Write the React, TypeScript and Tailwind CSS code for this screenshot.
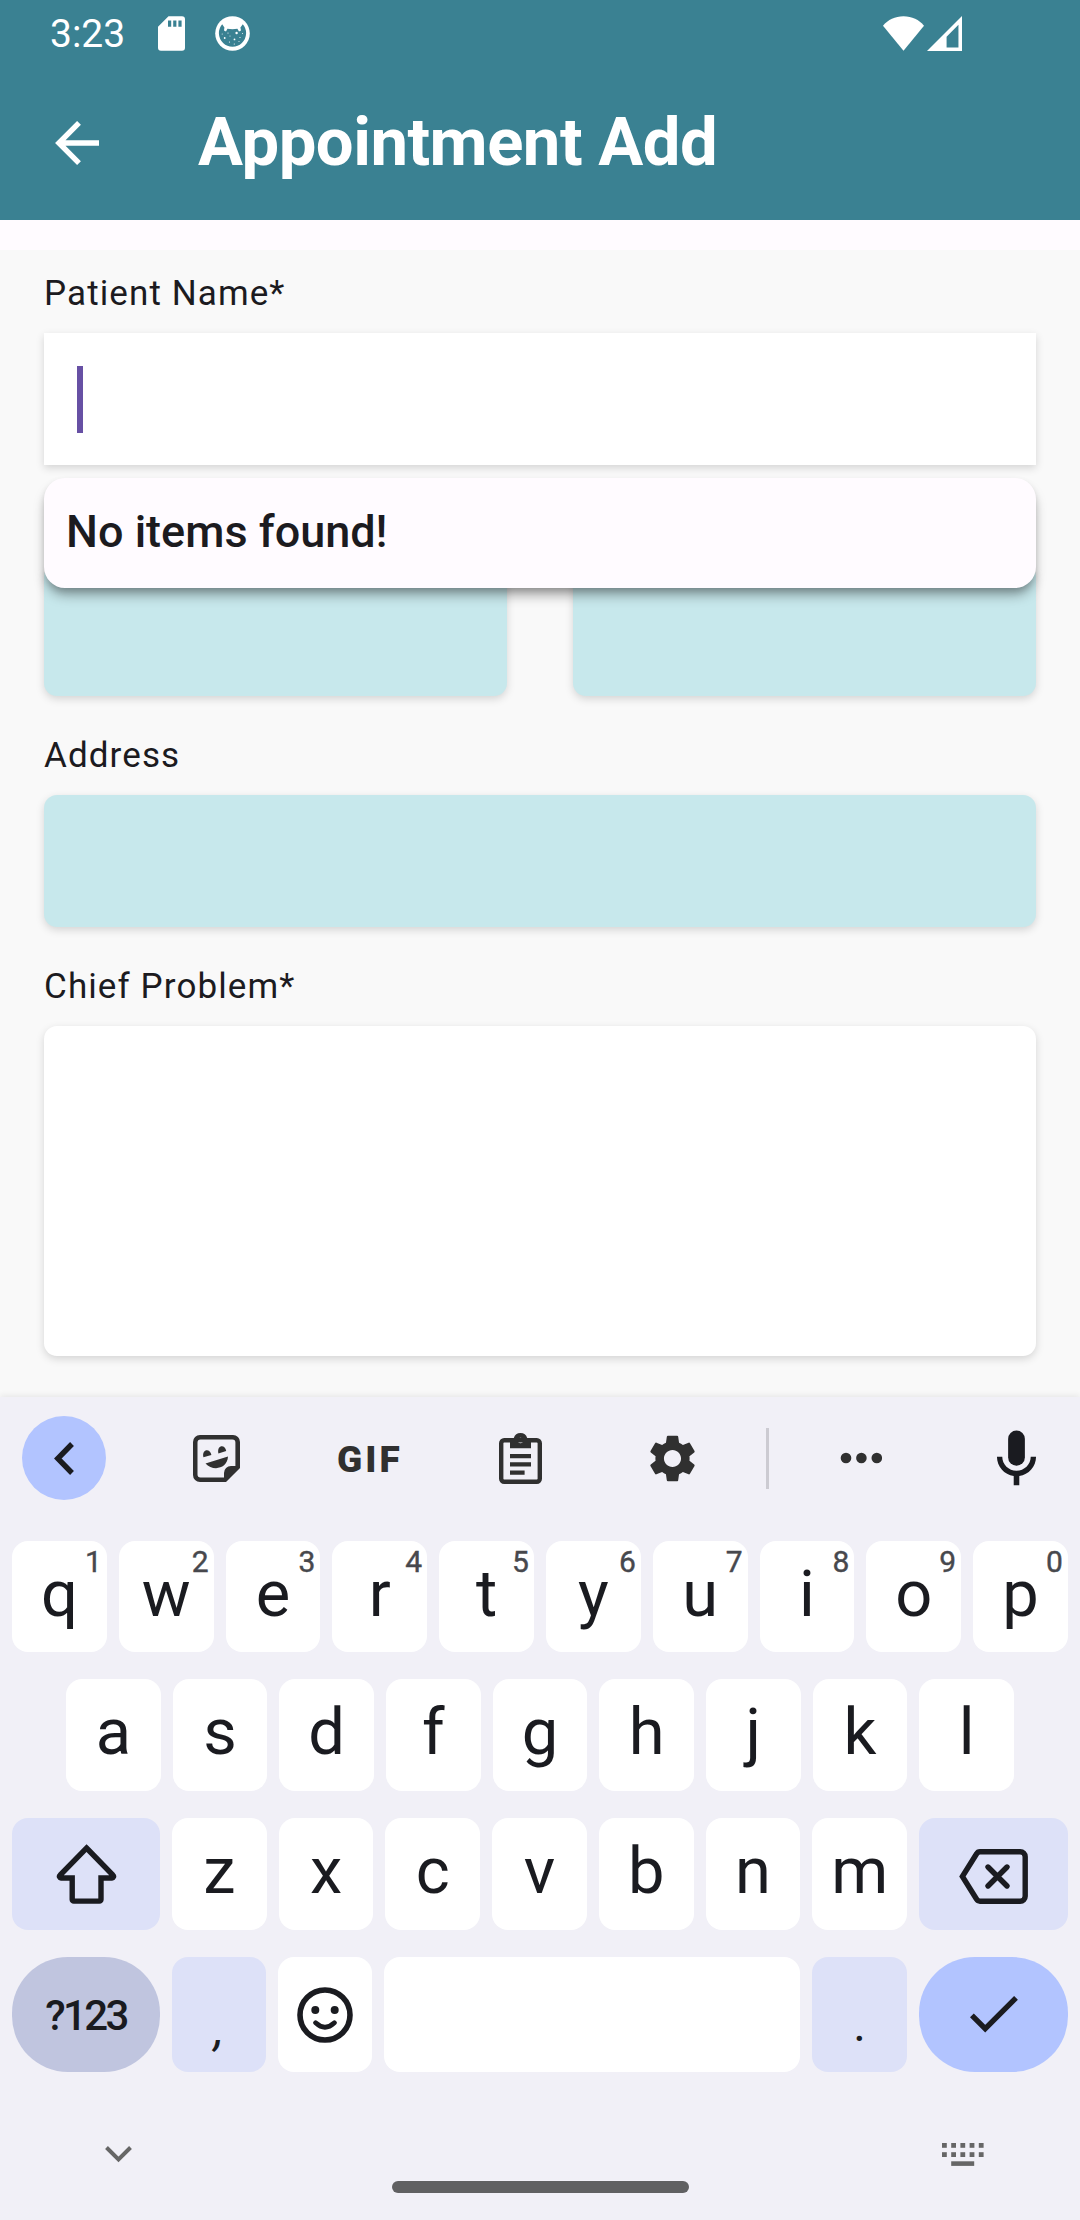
import type { ReactNode } from 'react';
import { MdSettings } from 'react-icons/md';

const INK = '#1a1b20';
const TOOL = '#303030';

function SdCardIcon() {
  return (
    <svg width="27" height="35" viewBox="0 0 27 34.5" fill="#fff" className="shrink-0">
      <path
        fillRule="evenodd"
        d="M10.5 0H24a3 3 0 0 1 3 3V31.5a3 3 0 0 1-3 3H3a3 3 0 0 1-3-3V10.5ZM10 4.2V10.6H13.2V4.2ZM15.2 4.2V10.6H18.4V4.2ZM20.4 4.2V10.6H23.6V4.2Z"
      />
    </svg>
  );
}

function CatIcon() {
  return (
    <svg width="35" height="35" viewBox="0 0 35 35" className="shrink-0">
      <circle cx="17.5" cy="17.5" r="17.3" fill="#fff" />
      <path
        d="M7.2 8.2 9.4 11.6 9 14.6 11 15.6 12.4 12.8Q17.5 13.6 22.4 12.8L24 15.6 26 14.4 25.4 11.4 27.8 8.2A13.6 13.6 0 1 1 7.2 8.2Z"
        fill="#3a8192"
      />
      <g fill="#fff">
        <circle cx="21.6" cy="17" r="1.2" />
        <circle cx="13" cy="17" r="0.6" />
        <circle cx="9.7" cy="22" r="0.9" />
        <circle cx="19.5" cy="23.4" r="0.9" />
        <circle cx="15" cy="20" r="0.5" />
        <circle cx="25" cy="21.5" r="0.6" />
        <circle cx="27.5" cy="17.5" r="0.5" />
        <circle cx="7.2" cy="18" r="0.5" />
        <circle cx="14.5" cy="26" r="0.6" />
        <circle cx="19.3" cy="28" r="0.6" />
        <circle cx="24" cy="25.5" r="0.5" />
      </g>
    </svg>
  );
}

function WifiIcon() {
  return (
    <svg width="41" height="35" viewBox="0 0 41 34.5" fill="#fff">
      <path d="M20.5 34.5 0 9.5C5 3.5 12 0 20.5 0S36 3.5 41 9.5Z" />
    </svg>
  );
}

function SignalIcon() {
  return (
    <svg width="35" height="35" viewBox="0 0 34.5 34.5" fill="#fff">
      <path fillRule="evenodd" d="M0 34.5 34.5 0V34.5ZM19.3 20.5V31H31V8.6Z" />
    </svg>
  );
}

function BackArrowIcon() {
  return (
    <svg width="44" height="44" viewBox="0 0 44 44" fill="none" stroke="#fff" strokeWidth="5.4">
      <path d="M24 1.9 3.9 22 24 42.1M4 22H44" />
    </svg>
  );
}

function StickerIcon() {
  return (
    <svg width="47" height="47" viewBox="0 0 47 47" fill={TOOL}>
      <path
        fillRule="evenodd"
        d="M7 0H40a7 7 0 0 1 7 7V33L33 47H7a7 7 0 0 1-7-7V7a7 7 0 0 1 7-7ZM7.5 4.6a3 3 0 0 0-3 3V39.4a3 3 0 0 0 3 3H31V38a7 7 0 0 1 7-7h4.4V7.6a3 3 0 0 0-3-3Z"
      />
      <path d="M10.4 22.2C8.6 13.6 17.4 13.2 18.4 20ZM25.4 18.4C23.6 9.6 32.4 9.2 33.2 16ZM12.5 28.4 35 21.6C34.4 34.4 19.4 36.4 12.5 28.4Z" />
    </svg>
  );
}

function ClipboardIcon() {
  return (
    <svg width="43" height="51" viewBox="0 0 43 51">
      <rect x="2.2" y="7.2" width="38.6" height="41.6" rx="3" fill="none" stroke={TOOL} strokeWidth="4.4" />
      <path
        fillRule="evenodd"
        fill={TOOL}
        d="M11 5H14.8a7 7 0 0 1 13.4 0H32V15.3H11ZM21.5 4.8a2.7 2.7 0 1 0 0 5.4 2.7 2.7 0 0 0 0-5.4Z"
      />
      <path d="M11 23.2H32M11 31.4H32M11 39.7H25.6" stroke={TOOL} strokeWidth="4.2" />
    </svg>
  );
}

function MicIcon() {
  return (
    <svg width="67" height="67" viewBox="0 0 24 24" fill={INK}>
      <rect x="9" y="2" width="6" height="12.6" rx="3" />
      <path d="M17.1 11.4c0 2.8-2.3 5-5.1 5s-5.1-2.2-5.1-5H5c0 3.5 2.6 6.4 6 6.9V21.6h2v-3.3c3.4-.5 6-3.4 6-6.9Z" />
    </svg>
  );
}

function ShiftIcon() {
  return (
    <svg width="61" height="60" viewBox="0 0 61 60" fill="none" stroke={INK} strokeWidth="5.4">
      <path d="M30.5 4 57 31.2a1.6 1.6 0 0 1-1.2 2.8H45V55.5a1.6 1.6 0 0 1-1.6 1.6H17.8a1.6 1.6 0 0 1-1.6-1.6V34H5.2A1.6 1.6 0 0 1 4 31.2Z" />
    </svg>
  );
}

function BackspaceIcon() {
  return (
    <svg width="69" height="55" viewBox="0 0 69 55" fill="none" stroke={INK} strokeWidth="5.4">
      <path d="M3.4 27.5 17.6 4.8A4 4 0 0 1 21 2.8H61.2a5 5 0 0 1 5 5V47.2a5 5 0 0 1-5 5H21a4 4 0 0 1-3.4-2Z" />
      <path d="M29 18 48 37M48 18 29 37" strokeLinecap="round" />
    </svg>
  );
}

function SmileyIcon() {
  return (
    <svg width="56" height="56" viewBox="0 0 56 56" fill="none" stroke={INK}>
      <circle cx="28" cy="28" r="25" strokeWidth="5.6" />
      <circle cx="18.3" cy="23" r="4" fill={INK} stroke="none" />
      <circle cx="37.7" cy="23" r="4" fill={INK} stroke="none" />
      <path d="M18.6 35.8Q28 44.6 37.4 35.8" strokeWidth="4.8" strokeLinecap="round" />
    </svg>
  );
}

function KeyboardIcon() {
  const columns = [0, 9.2, 18.4, 27.6, 36.8];
  return (
    <svg width="42" height="23" viewBox="0 0 42 23" fill="#666">
      {columns.map((x) => (
        <g key={x}>
          <rect x={x} y="0" width="4.8" height="4.8" />
          <rect x={x} y="9.2" width="4.8" height="4.8" />
        </g>
      ))}
      <rect x="9.2" y="18.3" width="23" height="4.6" />
    </svg>
  );
}

function Key({ label, hint }: { label: string; hint?: string }) {
  return (
    <div className="relative flex flex-1 items-center justify-center rounded-2xl bg-white text-[65px] leading-none text-[#1a1b20]">
      <span className="pb-[5px]">{label}</span>
      {hint && (
        <span className="absolute right-[5px] top-[5px] text-[30px] leading-[32px] text-[#47484d] [-webkit-text-stroke:0.4px_#47484d]">
          {hint}
        </span>
      )}
    </div>
  );
}

function Field({ label, children }: { label: string; children: ReactNode }) {
  return (
    <div className="flex flex-col">
      <div className="flex h-[83px] items-start pt-[22px] text-[35px] leading-[44px] tracking-[1.1px]">{label}</div>
      {children}
    </div>
  );
}

const boxShadow = 'shadow-[0_3px_8px_rgba(0,0,0,0.15)]';

export default function App() {
  return (
    <div className="flex h-[2220px] w-[1080px] flex-col overflow-hidden bg-[#f9f9f9] font-[Roboto,sans-serif] text-[#1c1b1f]">
      <header className="h-[220px] shrink-0 bg-[#3a8192] text-white">
        <div className="flex h-[66px] items-center pl-[50px] pr-[118px]">
          <span className="w-[108px] pt-[3px] text-[39px] leading-none">3:23</span>
          <SdCardIcon />
          <div className="ml-[30px]">
            <CatIcon />
          </div>
          <div className="ml-auto flex gap-[3px]">
            <WifiIcon />
            <SignalIcon />
          </div>
        </div>
        <div className="flex h-[154px] items-center pl-[55px]">
          <BackArrowIcon />
          <h1 className="ml-[99px] pb-[2px] text-[67px] font-bold leading-none tracking-[-0.5px]">Appointment Add</h1>
        </div>
      </header>
      <div className="h-[30px] shrink-0 bg-[#fffbff]" />

      <main className="flex h-[1147px] shrink-0 flex-col px-[44px]">
        <div className="relative">
          <Field label="Patient Name*">
            <div className={`flex h-[132px] items-center bg-white pl-[33px] ${boxShadow}`}>
              <div className="h-[67px] w-[6px] bg-[#6750a4]" />
            </div>
          </Field>
          <div className="absolute inset-x-0 top-[228px] z-10 flex h-[110px] items-center rounded-[21px] bg-[#fffbff] pb-[4px] pl-[22px] text-[45px] font-medium leading-none shadow-[0_9px_13px_-3px_rgba(0,0,0,0.4),0_3px_6px_rgba(0,0,0,0.1)]">
            No items found!
          </div>
        </div>
        <div className="mt-[99px] flex h-[132px] shrink-0 gap-[66px]">
          <div className={`flex-1 rounded-[13px] bg-[#c7e8ec] ${boxShadow}`} />
          <div className={`flex-1 rounded-[13px] bg-[#c7e8ec] ${boxShadow}`} />
        </div>
        <div className="mt-[16px]">
          <Field label="Address">
            <div className={`h-[132px] rounded-[13px] bg-[#c7e8ec] ${boxShadow}`} />
          </Field>
        </div>
        <div className="mt-[16px]">
          <Field label="Chief Problem*">
            <div className={`h-[330px] rounded-[13px] bg-white ${boxShadow}`} />
          </Field>
        </div>
      </main>

      <section className="flex flex-1 flex-col bg-[#f1f0f7] shadow-[0_-2px_6px_rgba(0,0,0,0.07)]">
        <div className="flex h-[122px] shrink-0 items-center pl-[22px]">
          <div className="flex size-[84px] items-center justify-center rounded-full bg-[#b2c4ff]">
            <svg width="20" height="33" viewBox="0 0 20 33" fill="none" stroke={INK} strokeWidth="5.4">
              <path d="M18 2 3.8 16.5 18 31" />
            </svg>
          </div>
          <div className="ml-[87px]">
            <StickerIcon />
          </div>
          <div className="ml-[97px] w-[65px] pt-[2px] text-[37px] font-black leading-none tracking-[3px] text-[#303030]">GIF</div>
          <div className="ml-[97px]">
            <ClipboardIcon />
          </div>
          <div className="ml-[102px]">
            <MdSettings size={57} color={TOOL} />
          </div>
          <div className="ml-[65px] h-[61px] w-[3px] bg-[#cccbd2]" />
          <svg width="42" height="12" viewBox="0 0 42 12" fill={TOOL} className="ml-[71px]">
            <circle cx="6" cy="6" r="5.3" />
            <circle cx="21.4" cy="6" r="5.3" />
            <circle cx="36.8" cy="6" r="5.3" />
          </svg>
          <div className="ml-[101px]">
            <MicIcon />
          </div>
        </div>

        <div className="mt-[22px] flex flex-col gap-[27px] px-3">
          <div className="flex h-[111px] gap-3">
            {[...'qwertyuiop'].map((c, i) => (
              <Key key={c} label={c} hint={String((i + 1) % 10)} />
            ))}
          </div>
          <div className="flex h-[112px] gap-3 px-[54px]">
            {[...'asdfghjkl'].map((c) => (
              <Key key={c} label={c} />
            ))}
          </div>
          <div className="flex h-[112px] gap-3">
            <div className="flex w-[148px] items-center justify-center rounded-2xl bg-[#dde1f8]">
              <ShiftIcon />
            </div>
            {[...'zxcvbnm'].map((c) => (
              <Key key={c} label={c} />
            ))}
            <div className="flex w-[149px] items-center justify-center rounded-2xl bg-[#dde1f8] pt-[4px]">
              <BackspaceIcon />
            </div>
          </div>
          <div className="flex h-[115px] gap-3">
            <div className="flex w-[148px] items-center justify-center rounded-[56px] bg-[#c0c5df] pt-[3px] text-[42px] font-medium leading-none tracking-[-2.6px] text-[#1a1b20]">
              ?123
            </div>
            <div className="flex w-[94px] items-center justify-center rounded-2xl bg-[#dde1f8] pt-[28px] text-[48px] italic leading-none text-[#1a1b20]">
              ,
            </div>
            <div className="flex w-[94px] items-center justify-center rounded-2xl bg-white">
              <SmileyIcon />
            </div>
            <div className="flex-1 rounded-2xl bg-white" />
            <div className="flex w-[95px] items-center justify-center rounded-2xl bg-[#dde1f8] pt-[20px] text-[48px] leading-none text-[#1a1b20]">
              .
            </div>
            <div className="flex w-[149px] items-center justify-center rounded-[56px] bg-[#b2c4ff]">
              <svg width="48" height="37" viewBox="0 0 48 37" fill="none" stroke={INK} strokeWidth="5.4">
                <path d="M1.9 19.4 15.2 32.6 46 1.9" />
              </svg>
            </div>
          </div>
        </div>

        <div className="mt-[71px] flex items-start justify-between pl-[105px] pr-[96px]">
          <svg width="27" height="17" viewBox="0 0 27 17" fill="none" stroke="#666" strokeWidth="4" className="mt-[3px]">
            <path d="M1.5 1.5 13.5 13.4 25.5 1.5" />
          </svg>
          <KeyboardIcon />
        </div>
        <div className="mx-auto mt-[15px] h-[12px] w-[297px] rounded-full bg-[#606062]" />
      </section>
    </div>
  );
}
